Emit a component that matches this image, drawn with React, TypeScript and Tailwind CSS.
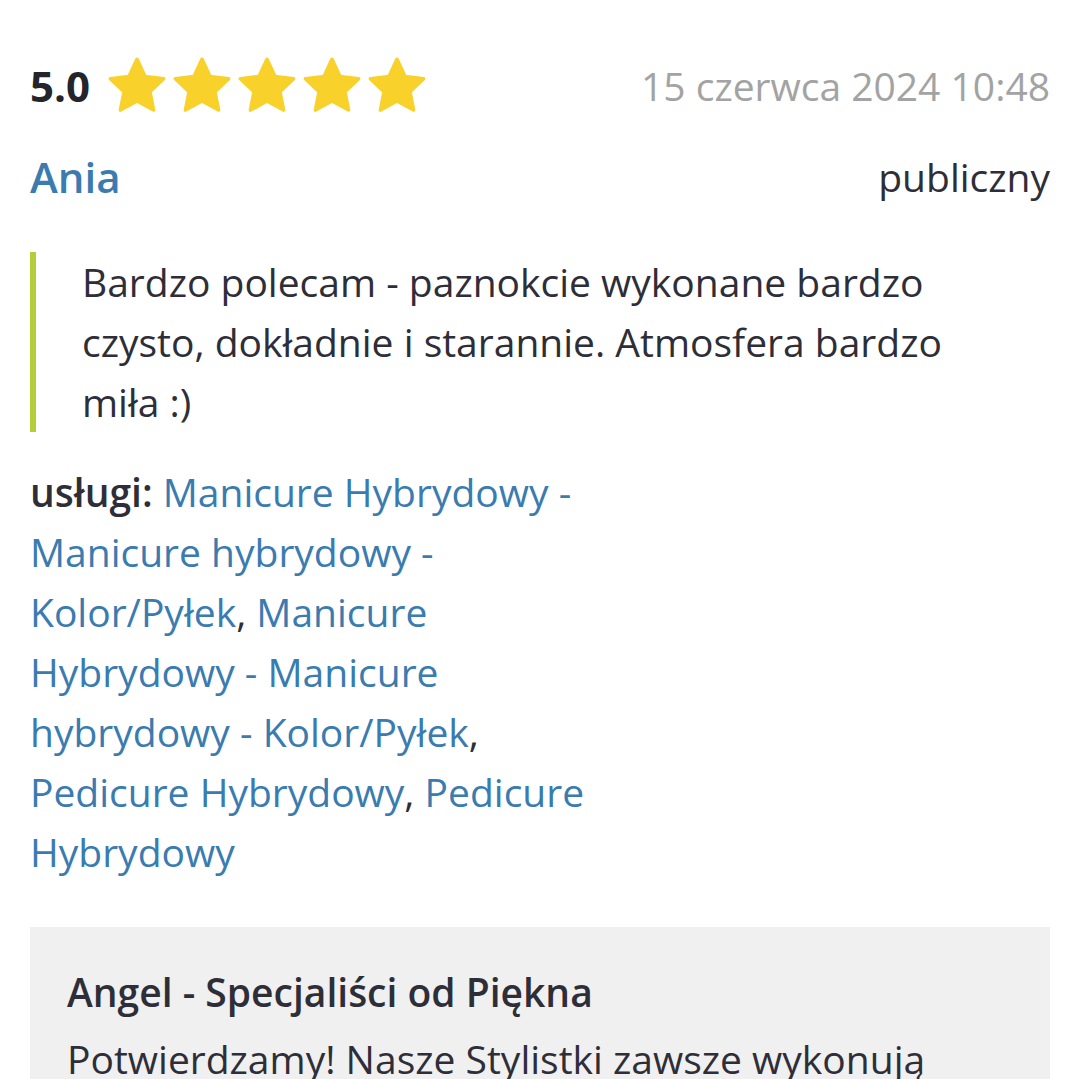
const font = { fontFamily: '"Open Sans", "Noto Sans", sans-serif' };

function Star() {
  return (
    <svg width="62" height="60" viewBox="0 0 24 23" className="block">
      <path
        d="M12 1.2l3.1 6.6 7.2.9-5.3 5 1.4 7.1L12 17.3l-6.4 3.5 1.4-7.1-5.3-5 7.2-.9z"
        fill="#f9d12b"
        stroke="#f9d12b"
        strokeWidth="1.4"
        strokeLinejoin="round"
      />
    </svg>
  );
}

function Link({ children }: { children: React.ReactNode }) {
  return <span className="text-[#3a7bb0]">{children}</span>;
}

export default function App() {
  return (
    <div className="w-[1080px] h-[1079px] overflow-hidden bg-white text-[#2e2e38]" style={font}>
      <div className="px-[30px] pt-[56px]">
        <div className="flex items-center justify-between">
          <div className="flex items-center">
            <span className="text-[42px] font-bold leading-[60px] text-[#23252b]">5.0</span>
            <div className="flex ml-[16px] gap-[3px]">
              <Star />
              <Star />
              <Star />
              <Star />
              <Star />
            </div>
          </div>
          <span className="text-[39px] leading-[60px] text-[#a3a3a3]">15 czerwca 2024 10:48</span>
        </div>

        <div className="flex items-center justify-between mt-[31px]">
          <span className="text-[42px] font-semibold leading-[60px] text-[#3a7bb0]">Ania</span>
          <span className="text-[39px] leading-[60px]">publiczny</span>
        </div>

        <div className="mt-[45px] border-l-[6px] border-[#b6cd3a] pl-[46px] pr-[60px]">
          <p className="text-[39px] leading-[60px]">
            Bardzo polecam - paznokcie wykonane bardzo czysto, dokładnie i starannie. Atmosfera bardzo miła :)
          </p>
        </div>

        <p className="mt-[30px] w-[575px] text-[39px] leading-[60px]">
          <span className="font-semibold">usługi: </span>
          <Link>Manicure Hybrydowy - Manicure hybrydowy - Kolor/Pyłek</Link>,{' '}
          <Link>Manicure Hybrydowy - Manicure hybrydowy - Kolor/Pyłek</Link>,{' '}
          <Link>Pedicure Hybrydowy</Link>, <Link>Pedicure Hybrydowy</Link>
        </p>

        <div className="mt-[45px] bg-[#f0f0f0] px-[37px] pt-[35px] pb-[40px]">
          <h3 className="text-[39px] font-semibold leading-[60px] text-[#2e2e38]">
            Angel - Specjaliści od Piękna
          </h3>
          <p className="mt-[7px] text-[39px] leading-[60px]">
            Potwierdzamy! Nasze Stylistki zawsze wykonują swoją pracę z największą starannością i dbałością o szczegóły.
          </p>
        </div>
      </div>
    </div>
  );
}
